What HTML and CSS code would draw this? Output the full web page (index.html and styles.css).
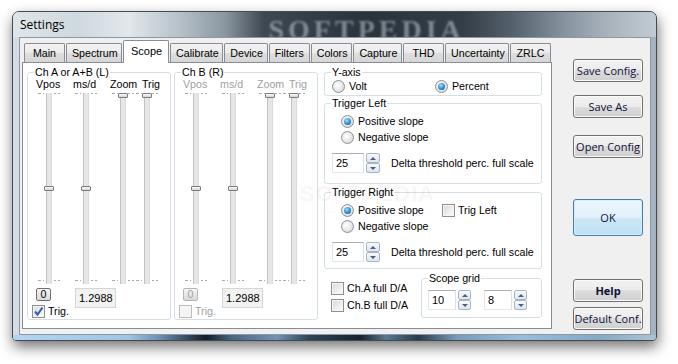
FILE: index.html
```html
<!DOCTYPE html>
<html lang="en">

<head>
  <meta charset="UTF-8">
  <title>Settings</title>
  <link rel="stylesheet" href="styles.css">
</head>

<body>

  <div class="window">
    <div class="titlebar">
      <span class="caption">Settings</span>
      <span class="glass-mark">SOFTPEDIA</span>
    </div>

    <div class="client">
      <div class="tabs">
        <div class="tabstrip">
          <div class="tab">Main</div>
          <div class="tab">Spectrum</div>
          <div class="tab active">Scope</div>
          <div class="tab">Calibrate</div>
          <div class="tab">Device</div>
          <div class="tab">Filters</div>
          <div class="tab">Colors</div>
          <div class="tab">Capture</div>
          <div class="tab">THD</div>
          <div class="tab">Uncertainty</div>
          <div class="tab">ZRLC</div>
        </div>

        <div class="tabpage">
          <!-- channel A -->
          <div class="group channel">
            <div class="group-title">Ch A or A+B (L)</div>
            <div class="col-labels"><span>Vpos</span><span>ms/d</span><span>Zoom</span><span>Trig</span></div>
            <div class="sliders">
              <div class="slider"><div class="track"></div><div class="thumb" style="top: 94px"></div></div>
              <div class="slider"><div class="track"></div><div class="thumb" style="top: 94px"></div></div>
              <div class="slider"><div class="track"></div><div class="thumb" style="top: 1px"></div></div>
              <div class="slider"><div class="track"></div><div class="thumb" style="top: 1px"></div></div>
            </div>
            <div class="ch-bottom">
              <div class="ch-left">
                <div class="zero">0</div>
                <div class="check">
                  <span class="cb on"><svg width="11" height="11" viewBox="0 0 11 11"><path d="M2 5.5 L4.5 8.5 L9.5 1.5" fill="none" stroke="#3358b8" stroke-width="2"/></svg></span>
                  Trig.
                </div>
              </div>
              <div class="value">1.2988</div>
            </div>
          </div>

          <!-- channel B -->
          <div class="group channel off">
            <div class="group-title">Ch B (R)</div>
            <div class="col-labels"><span>Vpos</span><span>ms/d</span><span>Zoom</span><span>Trig</span></div>
            <div class="sliders">
              <div class="slider"><div class="track"></div><div class="thumb" style="top: 94px"></div></div>
              <div class="slider"><div class="track"></div><div class="thumb" style="top: 94px"></div></div>
              <div class="slider"><div class="track"></div><div class="thumb" style="top: 1px"></div></div>
              <div class="slider"><div class="track"></div><div class="thumb" style="top: 1px"></div></div>
            </div>
            <div class="ch-bottom">
              <div class="ch-left">
                <div class="zero">0</div>
                <div class="check"><span class="cb"></span>Trig.</div>
              </div>
              <div class="value">1.2988</div>
            </div>
          </div>

          <div class="right-col">
            <div class="group yaxis">
              <div class="group-title">Y-axis</div>
              <div class="row">
                <div class="radio volt"><span class="rb"></span>Volt</div>
                <div class="radio"><span class="rb on"></span>Percent</div>
              </div>
            </div>

            <div class="group trigger trig-left">
              <div class="group-title">Trigger Left</div>
              <div class="row slope"><div class="radio"><span class="rb on"></span>Positive slope</div></div>
              <div class="row slope"><div class="radio"><span class="rb"></span>Negative slope</div></div>
              <div class="spin-row">
                <div class="spin"><span class="edit">25</span><span class="updown"><i class="up"></i><i class="down"></i></span></div>
                <span class="spin-label">Delta threshold perc. full scale</span>
              </div>
            </div>

            <div class="group trigger trig-right">
              <div class="group-title">Trigger Right</div>
              <div class="row slope">
                <div class="radio pos"><span class="rb on"></span>Positive slope</div>
                <div class="check"><span class="cb"></span>Trig Left</div>
              </div>
              <div class="row slope"><div class="radio"><span class="rb"></span>Negative slope</div></div>
              <div class="spin-row">
                <div class="spin"><span class="edit">25</span><span class="updown"><i class="up"></i><i class="down"></i></span></div>
                <span class="spin-label">Delta threshold perc. full scale</span>
              </div>
            </div>

            <div class="bottom-row">
              <div class="da-checks">
                <div class="check"><span class="cb"></span>Ch.A full D/A</div>
                <div class="check"><span class="cb"></span>Ch.B full D/A</div>
              </div>
              <div class="group grid">
                <div class="group-title">Scope grid</div>
                <div class="spin-row">
                  <div class="spin small"><span class="edit">10</span><span class="updown"><i class="up"></i><i class="down"></i></span></div>
                  <div class="spin small"><span class="edit">8</span><span class="updown"><i class="up"></i><i class="down"></i></span></div>
                </div>
              </div>
            </div>
          </div>

          <div class="watermark">SOFTPEDIA<sup>™</sup><small>www.softpedia.com</small></div>
        </div>
      </div>

      <div class="buttons">
        <div class="btn save">Save Config.</div>
        <div class="btn saveas">Save As</div>
        <div class="btn open">Open Config</div>
        <div class="btn ok">OK</div>
        <div class="btn help">Help</div>
        <div class="btn default">Default Conf.</div>
      </div>
    </div>

    <div class="frame-bottom"></div>
  </div>

</body>

</html>
```

FILE: styles.css
```css
* {
  box-sizing: border-box;
}

body {
  margin: 0;
  width: 678px;
  height: 364px;
  overflow: hidden;
  background: #fff;
  font: 8pt "Liberation Sans", Arial, sans-serif;
  color: #000;
}

/* window frame */

.window {
  margin: 11px 0 0 12px;
  width: 645px;
  height: 330px;
  border: 1px solid #3e4a55;
  border-radius: 7px 7px 4px 4px;
  background: linear-gradient(90deg, #d5dde4, #a3b3c2);
  box-shadow: 1px 6px 14px rgba(0, 0, 0, 0.55);
  display: flex;
  flex-direction: column;
  overflow: hidden;
}

.titlebar {
  height: 25px;
  padding-left: 7px;
  display: flex;
  align-items: center;
  overflow: hidden;
  background: linear-gradient(90deg, #dfe6eb 0%, #cfd8de 10%, #e2e8ec 18%, #b5c0c8 26%, #8a96a0 33%, #3e4852 39%, #2a333c 55%, #333d47 70%, #56626d 78%, #8894a0 86%, #aab5be 93%, #c2cbd2 100%);
}

.caption {
  font: 12px "Open Sans", sans-serif;
  color: #000;
}

.glass-mark {
  margin: 10px 0 0 204px;
  font: bold 28px "Liberation Serif", serif;
  letter-spacing: 4px;
  color: rgba(190, 202, 212, 0.55);
  filter: blur(1.2px);
  line-height: 1;
}

.client {
  margin: 0 5px 0 6px;
  height: 298px;
  border: 1px solid #8a98a5;
  background: #f0f0f0;
  display: flex;
}

.frame-bottom {
  height: 5px;
  background: linear-gradient(90deg, #b4d4ee 1%, #a0c4e2 18%, #6a8cae 23%, #121c26 30%, #4a6680 34%, #7393b0 41%, #2e4458 46%, #18222c 54%, #5a7690 58%, #2a3a4a 63%, #7a9aba 69%, #98bedc 79%, #86a8c4 91%, #a8c0d2 99%);
}

/* tabs */

.tabs {
  margin: 2px 0 0 2px;
  width: 530px;
}

.tabstrip {
  height: 22px;
  padding-left: 2px;
  display: flex;
  align-items: flex-end;
}

.tab {
  height: 19px;
  min-width: 41px;
  margin-right: 1px;
  padding: 0 5px;
  border: 1px solid #898c95;
  border-bottom: none;
  border-radius: 2px 2px 0 0;
  background: linear-gradient(#f3f3f3, #ebebeb 50%, #dedede 50%, #d6d6d6);
  line-height: 18px;
  text-align: center;
}

.tab.active {
  position: relative;
  z-index: 1;
  height: 23px;
  min-width: 45px;
  margin-bottom: -1px;
  padding: 0 7px;
  background: #fff;
  line-height: 20px;
  font-size: 11px;
}

.tabpage {
  position: relative;
  height: 267px;
  padding: 9px 0 0 4px;
  border: 1px solid #898c95;
  background: #fff;
  display: flex;
  align-items: flex-start;
}

/* group boxes */

.group {
  border: 1px solid #d5dfe5;
  border-radius: 3px;
}

.group-title {
  width: max-content;
  margin: -7px 0 0 6px;
  padding: 0 1px;
  background: #fff;
  line-height: 12px;
}

.channel {
  width: 144px;
  height: 248px;
}

.channel + .channel {
  margin-left: 3px;
}

.col-labels {
  display: grid;
  grid-template-columns: 37px 37px 32px auto;
  padding-left: 8px;
  line-height: 12px;
}

.sliders {
  display: grid;
  grid-template-columns: 37px 37px 24px 22px;
  padding-left: 10px;
  margin-top: 2px;
}

.slider {
  position: relative;
  width: 22px;
  height: 192px;
}

.slider::before,
.slider::after {
  content: "";
  position: absolute;
  left: 0;
  right: 0;
  height: 1px;
  background: repeating-linear-gradient(90deg, #a8a8a8 0 3px, transparent 3px 5px);
}

.slider::before {
  top: 1px;
}

.slider::after {
  bottom: 3px;
}

.track {
  position: absolute;
  z-index: 1;
  left: 8px;
  top: 1px;
  bottom: 0;
  width: 6px;
  background: #e6e6e6;
  border-left: 1px solid #c2c2c2;
  border-right: 1px solid #dadada;
  box-shadow: 2px 0 0 #fff, -2px 0 0 #fff;
}

.thumb {
  position: absolute;
  z-index: 2;
  left: 6px;
  width: 10px;
  height: 5px;
  border: 1px solid #7c7c7c;
  border-radius: 1px;
  background: linear-gradient(#fafafa, #d4d4d4);
}

.ch-bottom {
  display: flex;
  margin-top: 4px;
}

.ch-left {
  width: 47px;
  padding-left: 4px;
}

.zero {
  width: 15px;
  height: 13px;
  margin: 0 0 3px 4px;
  border: 1px solid #6f6f6f;
  border-radius: 2px;
  background: linear-gradient(#f6f6f6, #dadada);
  line-height: 11px;
  text-align: center;
}

.value {
  width: 41px;
  height: 20px;
  padding-left: 3px;
  border: 1px solid #d6d6d6;
  background: #f2f2f2;
  font-size: 11px;
  line-height: 18px;
}

.channel.off .col-labels,
.channel.off .check,
.channel.off .zero {
  color: #a0a0a0;
}

.channel.off .zero {
  border-color: #b4b4b4;
}

.channel.off .cb {
  border-color: #bcbcbc;
  background: #f4f4f4;
}

/* check boxes and radios */

.check,
.radio {
  display: flex;
  align-items: center;
  gap: 3px;
  height: 14px;
  line-height: 14px;
}

.radio {
  gap: 4px;
}

.cb {
  width: 13px;
  height: 13px;
  border: 1px solid #8e8f8f;
  background: linear-gradient(135deg, #d8d8d8, #fdfdfd);
  box-shadow: inset 0 0 0 1px #f6f6f6;
  display: flex;
  align-items: center;
  justify-content: center;
}

.rb {
  width: 13px;
  height: 13px;
  border-radius: 50%;
  border: 1px solid #8e8f8f;
  background: radial-gradient(circle at 40% 40%, #fff 0, #e4e4e4 60%, #cdcdcd 100%);
  display: flex;
  align-items: center;
  justify-content: center;
}

.rb.on::after {
  content: "";
  width: 7px;
  height: 7px;
  border-radius: 50%;
  background: radial-gradient(circle at 40% 35%, #9be0ff 0, #2b8fd6 55%, #0c4f8a 100%);
}

/* right column */

.right-col {
  width: 218px;
  margin-left: 6px;
}

.yaxis {
  height: 24px;
}

.yaxis .row {
  display: flex;
  margin: 1px 0 0 7px;
}

.volt {
  width: 103px;
}

.trigger {
  margin-top: 7px;
}

.trig-left {
  height: 81px;
}

.trig-right {
  height: 77px;
  margin-top: 8px;
}

.row.slope {
  display: flex;
  margin: 2px 0 0 16px;
}

.group-title + .row.slope {
  margin-top: 5px;
}

.radio.pos {
  width: 101px;
}

.spin-row {
  display: flex;
  align-items: center;
  margin: 9px 0 0 7px;
}

.spin {
  display: flex;
}

.edit {
  width: 32px;
  height: 20px;
  padding-left: 3px;
  border: 1px solid #abadb3;
  border-color: #abadb3 #dbdfe6 #e3e9ef #e2e3ea;
  background: #fff;
  font-size: 11px;
  line-height: 18px;
}

.updown {
  width: 14px;
  height: 20px;
  margin-left: 2px;
  display: flex;
  flex-direction: column;
}

.updown i {
  flex: 1;
  border: 1px solid #a9b4c2;
  border-radius: 2px;
  background: linear-gradient(#f7f9fb, #dde5ee);
  display: flex;
  align-items: center;
  justify-content: center;
}

.updown i::after {
  content: "";
  border-left: 3px solid transparent;
  border-right: 3px solid transparent;
}

.updown .up::after {
  border-bottom: 3px solid #4b5f80;
}

.updown .down::after {
  border-top: 3px solid #4b5f80;
}

.spin-label {
  margin-left: 11px;
}

.bottom-row {
  display: flex;
  margin-top: 9px;
}

.da-checks {
  margin: 3px 0 0 7px;
}

.da-checks .check + .check {
  margin-top: 3px;
}

.grid {
  width: 121px;
  height: 40px;
  margin-left: auto;
}

.grid .spin-row {
  margin: 6px 0 0 6px;
}

.spin.small .edit {
  width: 28px;
}

.spin.small .updown {
  width: 13px;
}

.spin.small + .spin.small {
  margin-left: 13px;
}

.watermark {
  position: absolute;
  z-index: 3;
  left: 277px;
  top: 120px;
  font: bold 22px "Liberation Sans", sans-serif;
  letter-spacing: 1px;
  color: rgba(0, 0, 0, 0.05);
  pointer-events: none;
  line-height: 22px;
}

.watermark sup {
  font-size: 8px;
  vertical-align: top;
}

.watermark small {
  display: block;
  font: 9px "Liberation Sans", sans-serif;
  letter-spacing: 0;
  margin-left: 18px;
}

/* side buttons */

.buttons {
  width: 70px;
  margin-left: 21px;
  display: flex;
  flex-direction: column;
}

.btn {
  height: 23px;
  border: 1px solid #707070;
  border-radius: 3px;
  background: linear-gradient(#f2f2f2 0%, #ebebeb 50%, #dddddd 50%, #cfcfcf 100%);
  box-shadow: inset 0 0 0 1px #fbfbfb;
  font: 11px "Open Sans", sans-serif;
  color: #10103a;
  display: flex;
  align-items: center;
  justify-content: center;
  white-space: nowrap;
}

.save {
  margin-top: 21px;
}

.saveas {
  margin-top: 13px;
}

.open {
  margin-top: 17px;
}

.ok {
  height: 37px;
  margin-top: 41px;
  border-color: #3c7fb1;
  background: linear-gradient(#edf6fc 0%, #e0f0fa 50%, #cde8f7 50%, #bfe0f3 100%);
  box-shadow: inset 0 0 0 1px #d4eefc;
}

.help {
  margin-top: 43px;
  font-weight: bold;
}

.default {
  margin-top: 5px;
}
```
